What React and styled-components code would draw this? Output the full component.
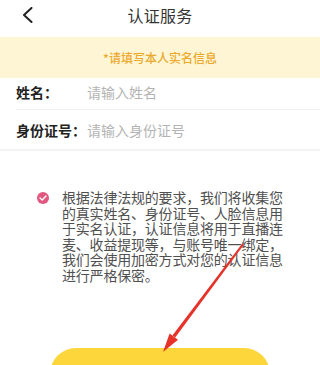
import React from "react";
import styled, { createGlobalStyle } from "styled-components";

const Global = createGlobalStyle`
  html, body {
    margin: 0;
    padding: 0;
    background: #ffffff;
    font-family: "Noto Sans CJK SC", "Noto Sans", sans-serif;
  }
  * { box-sizing: border-box; }
`;

const Page = styled.div`
  position: relative;
  width: 320px;
  min-height: 365px;
  overflow: hidden;
`;

const TopBar = styled.div`
  display: grid;
  grid-template-columns: 1fr auto 1fr;
  align-items: center;
  height: 37px;
  padding: 0 22px 7px;
`;

const BackBtn = styled.div`
  display: flex;
  align-items: center;
  width: 12px;
  height: 16px;
`;

const Title = styled.div`
  font-size: 16px;
  color: #333333;
  letter-spacing: 0.3px;
`;

const Notice = styled.div`
  display: flex;
  align-items: center;
  justify-content: center;
  height: 41px;
  background: #fdf5d4;
  color: #eca92c;
  font-size: 12px;
  font-weight: 500;
`;

const FormRow = styled.div`
  display: flex;
  align-items: center;
  height: ${(p) => p.$h}px;
  padding-bottom: ${(p) => p.$pb || 0}px;
  margin-left: ${(p) => (p.$inset ? 16 : 0)}px;
  padding-left: ${(p) => (p.$inset ? 0 : 16)}px;
  border-bottom: ${(p) => (p.$inset ? "1px solid #f1f1f1" : "2px solid #f3f3f3")};
`;

const Label = styled.span`
  flex-shrink: 0;
  width: 71px;
  white-space: nowrap;
  font-size: 14px;
  font-weight: 700;
  color: #222222;
`;

const Input = styled.input`
  flex: 1;
  min-width: 0;
  border: none;
  outline: none;
  padding: 0;
  background: transparent;
  font-family: inherit;
  font-size: 14px;
  color: #333;
  &::placeholder {
    color: #b4b4b4;
  }
`;

const Agreement = styled.div`
  display: flex;
  align-items: flex-start;
  gap: 13px;
  padding: 39px 0 0 37px;
`;

const Check = styled.div`
  flex-shrink: 0;
  display: flex;
  align-items: center;
  justify-content: center;
  width: 12px;
  height: 12px;
  margin-top: 2px;
  border-radius: 50%;
  background: #e2577f;
`;

const Terms = styled.p`
  margin: 0;
  width: 225px;
  font-size: 14px;
  letter-spacing: -0.2px;
  line-height: 15.5px;
  color: #505050;
`;

const Submit = styled.button`
  display: block;
  width: 220px;
  height: 54px;
  margin: 65px auto 0;
  border: none;
  border-radius: 26px;
  background: #fdd63b;
  color: #333;
  font-family: inherit;
  font-size: 16px;
`;

const Annotation = styled.svg`
  position: absolute;
  left: 0;
  top: 0;
  pointer-events: none;
`;

export default function App() {
  return (
    <>
      <Global />
      <Page>
        <TopBar>
          <BackBtn>
            <svg width="11" height="16" viewBox="0 0 11 16">
              <polyline
                points="9.5,1 2,8 9.5,15"
                fill="none"
                stroke="#222"
                strokeWidth="2"
                strokeLinecap="round"
                strokeLinejoin="round"
              />
            </svg>
          </BackBtn>
          <Title>认证服务</Title>
          <span />
        </TopBar>
        <Notice>*请填写本人实名信息</Notice>
        <FormRow $h={32} $pb={3} $inset>
          <Label>姓名：</Label>
          <Input placeholder="请输入姓名" />
        </FormRow>
        <FormRow $h={41}>
          <Label>身份证号：</Label>
          <Input placeholder="请输入身份证号" />
        </FormRow>
        <Agreement>
          <Check>
            <svg width="8" height="6" viewBox="0 0 8 6">
              <polyline
                points="1,3 3.2,5 7,1"
                fill="none"
                stroke="#fff"
                strokeWidth="1.4"
                strokeLinecap="round"
                strokeLinejoin="round"
              />
            </svg>
          </Check>
          <Terms>
            根据法律法规的要求，我们将收集您的真实姓名、身份证号、人脸信息用于实名认证，认证信息将用于直播连麦、收益提现等，与账号唯一绑定，我们会使用加密方式对您的认证信息进行严格保密。
          </Terms>
        </Agreement>
        <Submit>同意并认证</Submit>
        <Annotation width="320" height="365" viewBox="0 0 320 365">
          <polygon points="242.2,243.4 244,244.6 175.2,337.6 172.4,335.6" fill="#e5332a" />
          <polygon points="163,352 169.6,333.4 178,339.8" fill="#e5332a" />
        </Annotation>
      </Page>
    </>
  );
}
